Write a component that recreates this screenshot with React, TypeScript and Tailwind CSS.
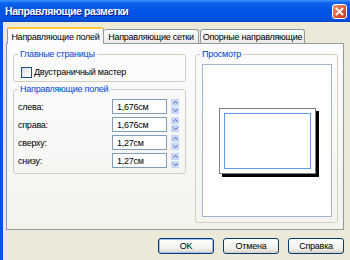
import React from "react";

function Spin() {
  return (
    <div className="ml-[4px] w-[8px] h-[15px] flex flex-col gap-[1px]">
      <div className="flex-1 bg-[#C6D5FA] rounded-[1px] flex items-center justify-center">
        <svg width="5" height="3" viewBox="0 0 5 3">
          <path d="M0.5 2.5 L2.5 0.5 L4.5 2.5" stroke="#4D6185" fill="none" strokeWidth="1" />
        </svg>
      </div>
      <div className="flex-1 bg-[#C6D5FA] rounded-[1px] flex items-center justify-center">
        <svg width="5" height="3" viewBox="0 0 5 3">
          <path d="M0.5 0.5 L2.5 2.5 L4.5 0.5" stroke="#4D6185" fill="none" strokeWidth="1" />
        </svg>
      </div>
    </div>
  );
}

function Row({ label, value }: { label: string; value: string }) {
  return (
    <div className="flex items-center h-[15px]">
      <span className="flex-1">{label}</span>
      <div className="w-[55px] h-[15px] border border-[#7F9DB9] bg-white flex items-center pl-[4px]">
        {value}
      </div>
      <Spin />
    </div>
  );
}

function Button({ children, def }: { children: React.ReactNode; def?: boolean }) {
  return (
    <div
      className={
        "w-[56px] h-[16px] rounded-[3px] border border-[#003C74] bg-[linear-gradient(to_bottom,#ffffff,#f0f0ea_70%,#d6d0c5)] flex items-center justify-center " +
        (def ? "shadow-[inset_0_0_0_1px_#A8C0EE]" : "")
      }
    >
      {children}
    </div>
  );
}

export default function App() {
  return (
    <div className="w-[350px] h-[260px] overflow-hidden flex flex-col bg-[#ECE9D8] text-black text-[9px] tracking-[-0.25px] leading-[12px] whitespace-nowrap font-['Liberation_Sans',Arial,sans-serif]">
      {/* Title bar */}
      <div className="h-[22px] shrink-0 flex items-center pl-[5px] pr-[3px] bg-[linear-gradient(to_bottom,#3d95ff_0%,#0a62ec_14%,#0055e5_50%,#0052e3_85%,#0046c8_100%)]">
        <span className="text-white font-bold text-[10.5px] tracking-[-0.4px] [text-shadow:1px_1px_0_#0a1883]">
          Направляющие разметки
        </span>
        <div className="ml-auto w-[15px] h-[15px] rounded-[3px] border border-white bg-[linear-gradient(135deg,#ef9a7c,#d8552f_60%,#c23d1c)] flex items-center justify-center">
          <svg width="9" height="9" viewBox="0 0 9 9">
            <path d="M1.5 1.5 L7.5 7.5 M7.5 1.5 L1.5 7.5" stroke="white" strokeWidth="1.8" strokeLinecap="square" />
          </svg>
        </div>
      </div>

      {/* Body */}
      <div className="flex-1 flex flex-col border-l-[3px] border-[#0055EA] pl-[3px] pt-[5px]">
        {/* Tabs */}
        <div className="flex items-end h-[16px] pl-[1px]">
          <div className="relative z-10 w-[97px] h-[17px] mb-[-1px] border border-b-0 border-[#919B9C] border-t-[2px] border-t-[#FFC83C] rounded-t-[3px] bg-[#FCFCFE] flex items-center justify-center">
            Направляющие полей
          </div>
          <div className="w-[95px] h-[14px] border border-b-0 border-l-0 border-[#919B9C] rounded-t-[3px] bg-[linear-gradient(to_bottom,#ffffff,#ecebe6)] flex items-center justify-center">
            Направляющие сетки
          </div>
          <div className="ml-[1px] w-[105px] h-[14px] border border-b-0 border-[#919B9C] rounded-t-[3px] bg-[linear-gradient(to_bottom,#ffffff,#ecebe6)] flex items-center justify-center">
            Опорные направляющие
          </div>
        </div>

        {/* Panel */}
        <div className="w-[338px] h-[187px] border border-[#919B9C] bg-[linear-gradient(to_bottom,#fcfcfe,#f4f3ee)] flex gap-[9px] pl-[6px] pr-[5px] pt-[4px]">
          {/* Left column */}
          <div className="w-[173px] flex flex-col gap-[1px]">
            <fieldset className="border border-[#D0D0BF] rounded-[3px] pl-[7px] pr-[4px] pt-[6px] pb-[3px]">
              <legend className="ml-[-3px] px-[2px] text-[#0046D5] leading-[12px]">Главные страницы</legend>
              <div className="flex items-center gap-[2px]">
                <div className="w-[11px] h-[11px] border border-[#1C5180] bg-[linear-gradient(135deg,#dcdcd7,#ffffff)]" />
                <span>Двустраничный мастер</span>
              </div>
            </fieldset>
            <fieldset className="border border-[#D0D0BF] rounded-[3px] pl-[4px] pr-[6px] pt-[4px] pb-[5px]">
              <legend className="ml-0 px-[2px] text-[#0046D5] leading-[12px]">Направляющие полей</legend>
              <div className="flex flex-col gap-[3px]">
                <Row label="слева:" value="1,676см" />
                <Row label="справа:" value="1,676см" />
                <Row label="сверху:" value="1,27см" />
                <Row label="снизу:" value="1,27см" />
              </div>
            </fieldset>
          </div>

          {/* Preview */}
          <fieldset className="w-[143px] h-[175px] border border-[#D0D0BF] rounded-[3px] pl-[6px] pr-[5px] pt-[4px] pb-[5px] flex flex-col">
            <legend className="ml-[-2px] px-[2px] text-[#0046D5] leading-[12px]">Просмотр</legend>
            <div className="flex-1 border border-[#A3B5CE] bg-white flex items-center justify-center">
              <div className="w-[97px] h-[66px] border border-[#808080] bg-white shadow-[3px_3px_0_#000] p-[4px]">
                <div className="w-full h-full border border-[#5E9CEB]" />
              </div>
            </div>
          </fieldset>
        </div>

        {/* Buttons */}
        <div className="w-[338px] flex justify-end gap-[9px] mt-[8px]">
          <Button def>OK</Button>
          <Button>Отмена</Button>
          <Button>Справка</Button>
        </div>
      </div>
    </div>
  );
}
